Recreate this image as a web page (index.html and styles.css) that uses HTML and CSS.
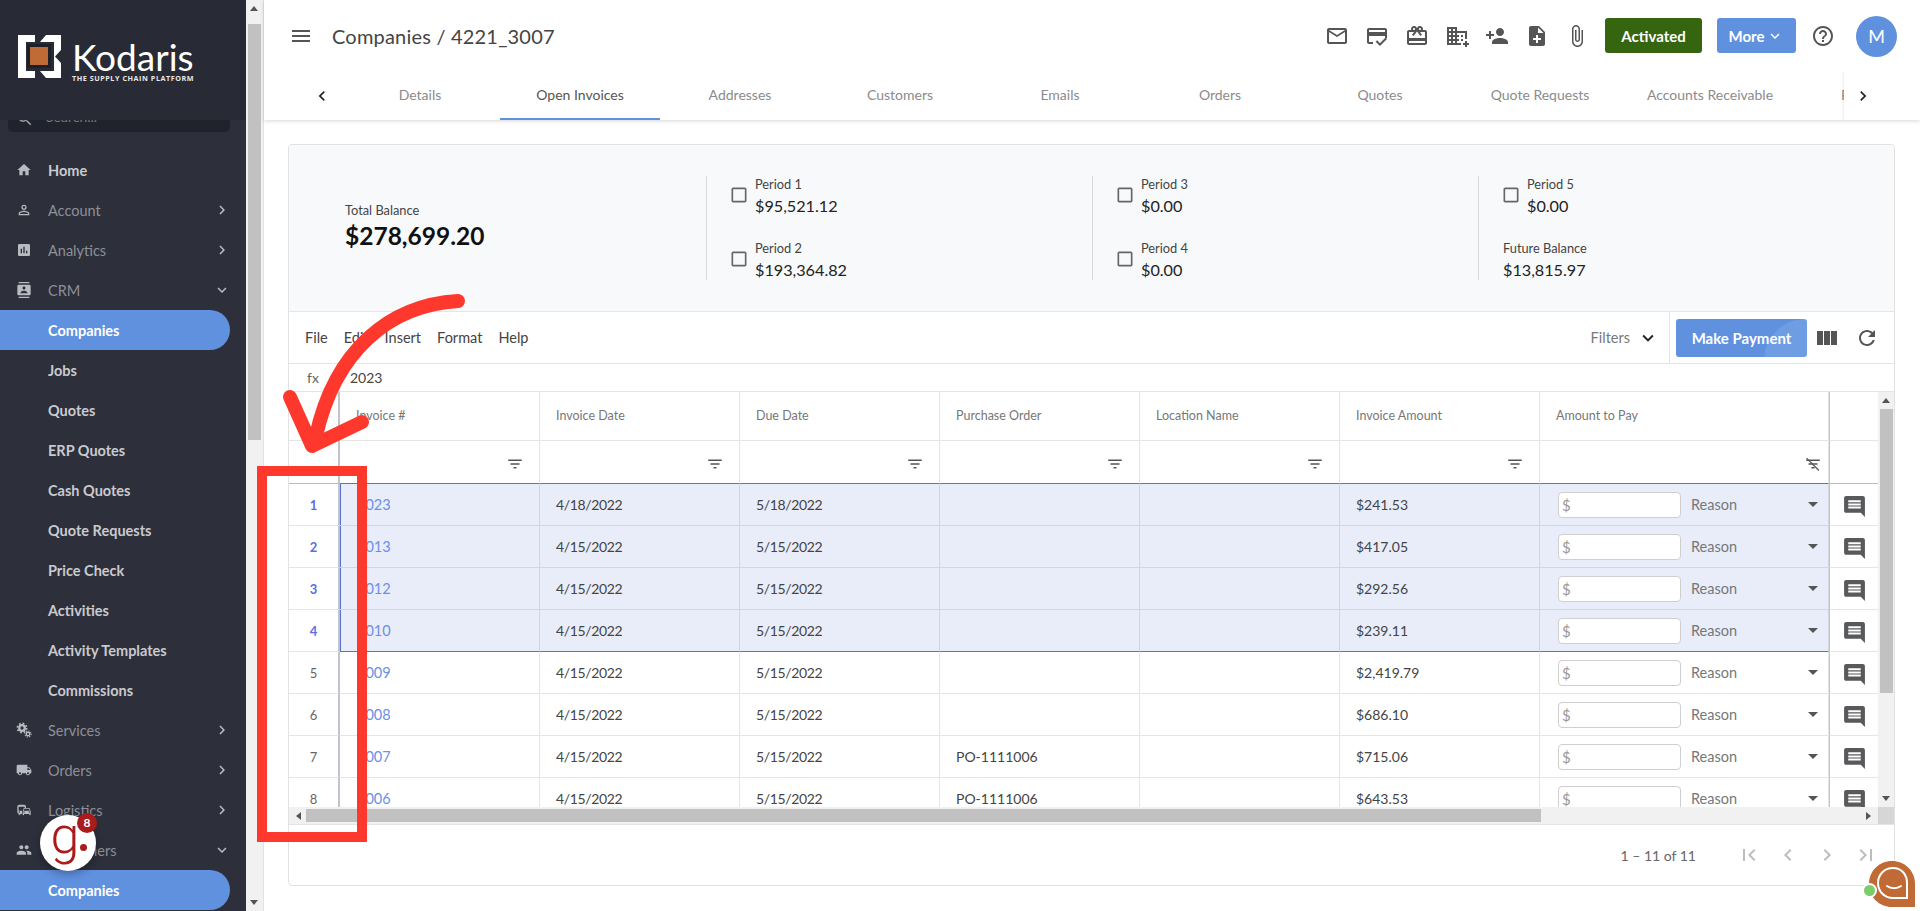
FILE: index.html
```html
<!DOCTYPE html>
<html lang="en">
<head>
<meta charset="utf-8">
<title>Companies / 4221_3007</title>
<link rel="stylesheet" href="styles.css">
</head>
<body>
<svg class="sprite" xmlns="http://www.w3.org/2000/svg">
  <symbol id="i-home" viewBox="0 0 24 24"><path d="M10 20v-6h4v6h5v-8h3L12 3 2 12h3v8z"/></symbol>
  <symbol id="i-search" viewBox="0 0 24 24"><path d="M15.5 14h-.79l-.28-.27C15.41 12.59 16 11.11 16 9.5 16 5.91 13.09 3 9.5 3S3 5.91 3 9.5 5.91 16 9.5 16c1.61 0 3.09-.59 4.23-1.57l.27.28v.79l5 4.99L20.49 19l-4.99-5zm-6 0C7.01 14 5 11.99 5 9.5S7.01 5 9.5 5 14 7.01 14 9.5 11.99 14 9.5 14z"/></symbol>
  <symbol id="i-person" viewBox="0 0 24 24"><path d="M12 5.9c1.16 0 2.1.94 2.1 2.1s-.94 2.1-2.1 2.1S9.9 9.16 9.9 8s.94-2.1 2.1-2.1m0 9c2.97 0 6.1 1.46 6.1 2.1v1.1H5.9V17c0-.64 3.13-2.1 6.1-2.1M12 4C9.79 4 8 5.79 8 8s1.79 4 4 4 4-1.79 4-4-1.79-4-4-4zm0 9c-2.67 0-8 1.34-8 4v3h16v-3c0-2.66-5.33-4-8-4z"/></symbol>
  <symbol id="i-chart" viewBox="0 0 24 24"><path d="M19 3H5c-1.1 0-2 .9-2 2v14c0 1.1.9 2 2 2h14c1.1 0 2-.9 2-2V5c0-1.1-.9-2-2-2zM9 17H7v-7h2v7zm4 0h-2V7h2v10zm4 0h-2v-4h2v4z"/></symbol>
  <symbol id="i-contacts" viewBox="0 0 24 24"><path d="M20 0H4v2h16V0zM4 24h16v-2H4v2zM20 4H4c-1.1 0-2 .9-2 2v12c0 1.1.9 2 2 2h16c1.1 0 2-.9 2-2V6c0-1.1-.9-2-2-2zm-8 2.75c1.24 0 2.25 1.01 2.25 2.25s-1.01 2.25-2.25 2.25S9.75 10.24 9.75 9 10.76 6.75 12 6.75zM17 17H7v-1.5c0-1.67 3.33-2.5 5-2.5s5 .83 5 2.5V17z"/></symbol>
  <symbol id="i-gears" viewBox="0 0 24 24"><circle cx="9" cy="9" r="4.2" fill="none" stroke="currentColor" stroke-width="3.4"/><circle cx="9" cy="9" r="7" fill="none" stroke="currentColor" stroke-width="2.4" stroke-dasharray="2.6 2.9"/><circle cx="18" cy="18" r="2.6" fill="none" stroke="currentColor" stroke-width="2"/><circle cx="18" cy="18" r="4.6" fill="none" stroke="currentColor" stroke-width="1.6" stroke-dasharray="1.8 1.8"/></symbol>
  <symbol id="i-truck" viewBox="0 0 24 24"><path d="M20 8h-3V4H3c-1.1 0-2 .9-2 2v11h2c0 1.66 1.34 3 3 3s3-1.34 3-3h6c0 1.66 1.34 3 3 3s3-1.34 3-3h2v-5l-3-4zM6 18.5c-.83 0-1.5-.67-1.5-1.5s.67-1.5 1.5-1.5 1.5.67 1.5 1.5-.67 1.5-1.5 1.5zm13.5-9l1.96 2.5H17V9.5h2.5zm-1.5 9c-.83 0-1.5-.67-1.5-1.5s.67-1.5 1.5-1.5 1.5.67 1.5 1.5-.67 1.5-1.5 1.5z"/></symbol>
  <symbol id="i-commute" viewBox="0 0 24 24"><path d="M12 4H5C3.34 4 2 5.34 2 7v8c0 1.66 1.34 3 3 3l-1 1v1h1l2-2h2v-5H4V6.99L13 7v2h2V7c0-1.66-1.34-3-3-3zM5 14c.55 0 1 .45 1 1s-.45 1-1 1-1-.45-1-1 .45-1 1-1zm15.57-4.34c-.14-.4-.52-.66-.97-.66h-7.19c-.46 0-.83.26-.98.66L10 13.77l.01 5.51c0 .38.31.72.69.72h.62c.38 0 .68-.38.68-.76V18h8v1.24c0 .38.31.76.69.76h.61c.38 0 .69-.34.69-.72l.01-1.37v-4.14l-1.43-4.07zm-8.16.34h7.19l1.03 3h-9.25l1.03-3zM12 16c-.55 0-1-.45-1-1s.45-1 1-1 1 .45 1 1-.45 1-1 1zm8 0c-.55 0-1-.45-1-1s.45-1 1-1 1 .45 1 1-.45 1-1 1z"/></symbol>
  <symbol id="i-group" viewBox="0 0 24 24"><path d="M16 11c1.66 0 2.99-1.34 2.99-3S17.66 5 16 5c-1.66 0-3 1.34-3 3s1.34 3 3 3zm-8 0c1.66 0 2.99-1.34 2.99-3S9.66 5 8 5C6.34 5 5 6.34 5 8s1.34 3 3 3zm0 2c-2.33 0-7 1.17-7 3.5V19h14v-2.5c0-2.33-4.67-3.5-7-3.5zm8 0c-.29 0-.62.02-.97.05 1.16.84 1.97 1.97 1.97 3.45V19h6v-2.5c0-2.33-4.67-3.5-7-3.5z"/></symbol>
  <symbol id="i-right" viewBox="0 0 24 24"><path d="M10 6L8.59 7.41 13.17 12l-4.58 4.59L10 18l6-6z"/></symbol>
  <symbol id="i-left" viewBox="0 0 24 24"><path d="M15.41 7.41L14 6l-6 6 6 6 1.41-1.41L10.83 12z"/></symbol>
  <symbol id="i-down" viewBox="0 0 24 24"><path d="M16.59 8.59L12 13.17 7.41 8.59 6 10l6 6 6-6z"/></symbol>
  <symbol id="i-menu" viewBox="0 0 24 24"><path d="M3 18h18v-2H3v2zm0-5h18v-2H3v2zm0-7v2h18V6H3z"/></symbol>
  <symbol id="i-mail" viewBox="0 0 24 24"><path d="M20 4H4c-1.1 0-1.99.9-1.99 2L2 18c0 1.1.9 2 2 2h16c1.1 0 2-.9 2-2V6c0-1.1-.9-2-2-2zm0 14H4V8l8 5 8-5v10zm-8-7L4 6h16l-8 5z"/></symbol>
  <symbol id="i-score" viewBox="0 0 24 24"><path d="M20 4H4c-1.11 0-2 .89-2 2v12c0 1.11.89 2 2 2h4v-2H4v-6h16v2h2V6c0-1.11-.89-2-2-2zm0 4H4V6h16v2zm-5.07 11.17l-2.83-2.83-1.41 1.41L14.93 22 22 14.93l-1.41-1.41-5.66 5.65z"/></symbol>
  <symbol id="i-gift" viewBox="0 0 24 24"><path d="M20 6h-2.18c.11-.31.18-.65.18-1 0-1.66-1.34-3-3-3-1.05 0-1.96.54-2.5 1.35l-.5.67-.5-.68C10.96 2.54 10.05 2 9 2 7.34 2 6 3.34 6 5c0 .35.07.69.18 1H4c-1.11 0-1.99.89-1.99 2L2 19c0 1.11.89 2 2 2h16c1.11 0 2-.89 2-2V8c0-1.11-.89-2-2-2zm-5-2c.55 0 1 .45 1 1s-.45 1-1 1-1-.45-1-1 .45-1 1-1zM9 4c.55 0 1 .45 1 1s-.45 1-1 1-1-.45-1-1 .45-1 1-1zm11 15H4v-2h16v2zm0-5H4V8h5.08L7 10.83 8.62 12 11 8.76l1-1.36 1 1.36L15.38 12 17 10.83 14.92 8H20v6z"/></symbol>
  <symbol id="i-domain" viewBox="0 0 24 24"><path d="M12 7V3H2v18h14v-2h-4v-2h2v-2h-2v-2h2v-2h-2V9h8v6h2V7H12zM6 19H4v-2h2v2zm0-4H4v-2h2v2zm0-4H4V9h2v2zm0-4H4V5h2v2zm4 12H8v-2h2v2zm0-4H8v-2h2v2zm0-4H8V9h2v2zm0-4H8V5h2v2zm14 12v2h-2v2h-2v-2h-2v-2h2v-2h2v2h2zm-6-8h-2v2h2v-2zm0 4h-2v2h2v-2z"/></symbol>
  <symbol id="i-padd" viewBox="0 0 24 24"><path d="M15 12c2.21 0 4-1.79 4-4s-1.79-4-4-4-4 1.79-4 4 1.79 4 4 4zm-9-2V7H4v3H1v2h3v3h2v-3h3v-2H6zm9 4c-2.67 0-8 1.34-8 4v2h16v-2c0-2.66-5.33-4-8-4z"/></symbol>
  <symbol id="i-note" viewBox="0 0 24 24"><path d="M14 2H6c-1.1 0-1.99.9-1.99 2L4 20c0 1.1.89 2 1.99 2H18c1.1 0 2-.9 2-2V8l-6-6zm2 14h-3v3h-2v-3H8v-2h3v-3h2v3h3v2zm-3-7V3.5L18.5 9H13z"/></symbol>
  <symbol id="i-clip" viewBox="0 0 24 24"><path d="M16.5 6v11.5c0 2.21-1.79 4-4 4s-4-1.79-4-4V5c0-1.38 1.12-2.5 2.5-2.5s2.5 1.12 2.5 2.5v10.5c0 .55-.45 1-1 1s-1-.45-1-1V6H10v9.5c0 1.38 1.12 2.5 2.5 2.5s2.5-1.12 2.5-2.5V5c0-2.21-1.79-4-4-4S7 2.79 7 5v12.5c0 3.04 2.46 5.5 5.5 5.5s5.5-2.46 5.5-5.5V6h-1.5z"/></symbol>
  <symbol id="i-help" viewBox="0 0 24 24"><path d="M11 18h2v-2h-2v2zm1-16C6.48 2 2 6.48 2 12s4.48 10 10 10 10-4.48 10-10S17.52 2 12 2zm0 18c-4.41 0-8-3.59-8-8s3.59-8 8-8 8 3.59 8 8-3.59 8-8 8zm0-14c-2.21 0-4 1.79-4 4h2c0-1.1.9-2 2-2s2 .9 2 2c0 2-3 1.75-3 5h2c0-2.25 3-2.5 3-5 0-2.21-1.79-4-4-4z"/></symbol>
  <symbol id="i-cols" viewBox="0 0 24 24"><path d="M2 5v14h6V5H2zm7 0v14h6V5H9zm7 0v14h6V5h-6z"/></symbol>
  <symbol id="i-refresh" viewBox="0 0 24 24"><path d="M17.65 6.35C16.2 4.9 14.21 4 12 4c-4.42 0-7.99 3.58-7.99 8s3.57 8 7.99 8c3.73 0 6.84-2.55 7.73-6h-2.08c-.82 2.33-3.04 4-5.65 4-3.31 0-6-2.69-6-6s2.69-6 6-6c1.66 0 3.14.69 4.22 1.78L13 11h7V4l-2.35 2.35z"/></symbol>
  <symbol id="i-box" viewBox="0 0 24 24"><path d="M19 5v14H5V5h14m0-2H5c-1.1 0-2 .9-2 2v14c0 1.1.9 2 2 2h14c1.1 0 2-.9 2-2V5c0-1.1-.9-2-2-2z"/></symbol>
  <symbol id="i-filter" viewBox="0 0 24 24"><path d="M10 18h4v-2h-4v2zM3 6v2h18V6H3zm3 7h12v-2H6v2z"/></symbol>
  <symbol id="i-filteroff" viewBox="0 0 24 24"><path d="M10 18h4v-2h-4v2zM3 6v2h18V6H3zm3 7h12v-2H6v2z"/><path d="M4 3.5L20.5 20l-1.2 1.2L2.8 4.7z"/></symbol>
  <symbol id="i-chat" viewBox="0 0 24 24"><path d="M20 2H4c-1.1 0-1.99.9-1.99 2L2 16c0 1.1.9 2 2 2h14l4 4V4c0-1.1-.9-2-2-2zm-2 12H6v-2h12v2zm0-3H6V9h12v2zm0-3H6V6h12v2z"/></symbol>
  <symbol id="i-first" viewBox="0 0 24 24"><path d="M18.41 16.59L13.82 12l4.59-4.59L17 6l-6 6 6 6zM6 6h2v12H6z"/></symbol>
  <symbol id="i-last" viewBox="0 0 24 24"><path d="M5.59 7.41L10.18 12l-4.59 4.59L7 18l6-6-6-6zM16 6h2v12h-2z"/></symbol>
</svg>

<aside class="sidebar">
  <div class="brand">
    <svg class="brand-mark" viewBox="0 0 43 43">
      <polygon class="w" points="0,0 17,0 17,7 8,7 8,36 17,36 17,43 0,43"/>
      <polygon class="w" points="28,0 43,0 43,15 37,21.5 43,28 43,43 28,43 22,36 36,36 36,7 22,7"/>
      <rect class="o" x="10.5" y="10.5" width="21" height="21"/>
    </svg>
    <div class="brand-text">
      <div class="brand-name">Kodaris</div>
      <div class="brand-tag">THE SUPPLY CHAIN PLATFORM</div>
    </div>
  </div>
  <div class="search-peek"><svg class="search-ico"><use href="#i-search"/></svg><span>Search...</span></div>
  <nav class="nav">
    <a class="nav-item top lit"><svg class="ico"><use href="#i-home"/></svg><span>Home</span></a>
    <a class="nav-item top"><svg class="ico"><use href="#i-person"/></svg><span>Account</span><svg class="caret"><use href="#i-right"/></svg></a>
    <a class="nav-item top"><svg class="ico"><use href="#i-chart"/></svg><span>Analytics</span><svg class="caret"><use href="#i-right"/></svg></a>
    <a class="nav-item top"><svg class="ico"><use href="#i-contacts"/></svg><span>CRM</span><svg class="caret"><use href="#i-down"/></svg></a>
    <a class="nav-item sub active"><span>Companies</span></a>
    <a class="nav-item sub"><span>Jobs</span></a>
    <a class="nav-item sub"><span>Quotes</span></a>
    <a class="nav-item sub"><span>ERP Quotes</span></a>
    <a class="nav-item sub"><span>Cash Quotes</span></a>
    <a class="nav-item sub"><span>Quote Requests</span></a>
    <a class="nav-item sub"><span>Price Check</span></a>
    <a class="nav-item sub"><span>Activities</span></a>
    <a class="nav-item sub"><span>Activity Templates</span></a>
    <a class="nav-item sub"><span>Commissions</span></a>
    <a class="nav-item top"><svg class="ico"><use href="#i-gears"/></svg><span>Services</span><svg class="caret"><use href="#i-right"/></svg></a>
    <a class="nav-item top"><svg class="ico"><use href="#i-truck"/></svg><span>Orders</span><svg class="caret"><use href="#i-right"/></svg></a>
    <a class="nav-item top"><svg class="ico"><use href="#i-commute"/></svg><span>Logistics</span><svg class="caret"><use href="#i-right"/></svg></a>
    <a class="nav-item top"><svg class="ico"><use href="#i-group"/></svg><span>Customers</span><svg class="caret"><use href="#i-down"/></svg></a>
    <a class="nav-item sub active"><span>Companies</span></a>
  </nav>
</aside>

<div class="side-scroll">
  <span class="arr up"></span>
  <span class="side-thumb"></span>
  <span class="arr dn"></span>
</div>

<main class="main">
  <header class="topbar">
    <div class="toprow">
      <svg class="menu-ico"><use href="#i-menu"/></svg>
      <h1 class="title">Companies / 4221_3007</h1>
      <div class="actions">
        <svg class="act"><use href="#i-mail"/></svg>
        <svg class="act"><use href="#i-score"/></svg>
        <svg class="act"><use href="#i-gift"/></svg>
        <svg class="act"><use href="#i-domain"/></svg>
        <svg class="act"><use href="#i-padd"/></svg>
        <svg class="act"><use href="#i-note"/></svg>
        <svg class="act"><use href="#i-clip"/></svg>
      </div>
      <button class="btn green">Activated</button>
      <button class="btn blue more">More<svg class="more-caret"><use href="#i-down"/></svg></button>
      <svg class="help"><use href="#i-help"/></svg>
      <div class="avatar">M</div>
    </div>
    <div class="tabs">
      <div class="tab-nav left"><svg><use href="#i-left"/></svg></div>
      <div class="tab-list">
        <a class="tab">Details</a>
        <a class="tab active">Open Invoices</a>
        <a class="tab">Addresses</a>
        <a class="tab">Customers</a>
        <a class="tab">Emails</a>
        <a class="tab">Orders</a>
        <a class="tab">Quotes</a>
        <a class="tab">Quote Requests</a>
        <a class="tab wide">Accounts Receivable</a>
        <a class="tab clipped">Favorites</a>
      </div>
      <div class="tab-nav right"><svg><use href="#i-right"/></svg></div>
    </div>
  </header>

  <section class="card">
    <div class="summary">
      <div class="total">
        <div class="lab">Total Balance</div>
        <div class="big">$278,699.20</div>
      </div>
      <div class="period-col">
        <div class="stat"><svg class="check"><use href="#i-box"/></svg><div><div class="lab">Period 1</div><div class="val">$95,521.12</div></div></div>
        <div class="stat"><svg class="check"><use href="#i-box"/></svg><div><div class="lab">Period 2</div><div class="val">$193,364.82</div></div></div>
      </div>
      <div class="period-col">
        <div class="stat"><svg class="check"><use href="#i-box"/></svg><div><div class="lab">Period 3</div><div class="val">$0.00</div></div></div>
        <div class="stat"><svg class="check"><use href="#i-box"/></svg><div><div class="lab">Period 4</div><div class="val">$0.00</div></div></div>
      </div>
      <div class="period-col">
        <div class="stat"><svg class="check"><use href="#i-box"/></svg><div><div class="lab">Period 5</div><div class="val">$0.00</div></div></div>
        <div class="stat future"><div><div class="lab">Future Balance</div><div class="val">$13,815.97</div></div></div>
      </div>
    </div>

    <div class="toolbar">
      <div class="menus"><span>File</span><span>Edit</span><span>Insert</span><span>Format</span><span>Help</span></div>
      <div class="filters"><em>Filters</em><svg><use href="#i-down"/></svg></div>
      <button class="btn blue pay">Make Payment</button>
      <svg class="tool cols"><use href="#i-cols"/></svg>
      <svg class="tool refresh"><use href="#i-refresh"/></svg>
    </div>

    <div class="fxbar"><span class="fx">fx</span><span>2023</span></div>

    <div class="grid-area">
      <div class="table-clip">
        <table class="sheet">
          <colgroup><col class="c-n"><col class="c-i"><col class="c-d"><col class="c-d"><col class="c-d"><col class="c-d"><col class="c-d"><col class="c-p"><col class="c-x"></colgroup>
          <thead>
            <tr class="h1"><th class="n"></th><th>Invoice #</th><th>Invoice Date</th><th>Due Date</th><th>Purchase Order</th><th>Location Name</th><th>Invoice Amount</th><th>Amount to Pay</th><th class="x"></th></tr>
            <tr class="h2"><th class="n"></th>
              <th><svg class="fl"><use href="#i-filter"/></svg></th><th><svg class="fl"><use href="#i-filter"/></svg></th><th><svg class="fl"><use href="#i-filter"/></svg></th><th><svg class="fl"><use href="#i-filter"/></svg></th><th><svg class="fl"><use href="#i-filter"/></svg></th><th><svg class="fl"><use href="#i-filter"/></svg></th><th class="off"><svg class="fl"><use href="#i-filteroff"/></svg></th><th class="x"></th></tr>
          </thead>
          <tbody>
            <tr class="sel first"><td class="n">1</td><td class="link">2023</td><td>4/18/2022</td><td>5/18/2022</td><td></td><td></td><td>$241.53</td><td class="pay-cell"><div class="pay-wrap"><span class="money">$</span><span class="reason">Reason</span><i class="tri"></i></div></td><td class="x"><svg class="cm"><use href="#i-chat"/></svg></td></tr>
            <tr class="sel"><td class="n">2</td><td class="link">2013</td><td>4/15/2022</td><td>5/15/2022</td><td></td><td></td><td>$417.05</td><td class="pay-cell"><div class="pay-wrap"><span class="money">$</span><span class="reason">Reason</span><i class="tri"></i></div></td><td class="x"><svg class="cm"><use href="#i-chat"/></svg></td></tr>
            <tr class="sel"><td class="n">3</td><td class="link">2012</td><td>4/15/2022</td><td>5/15/2022</td><td></td><td></td><td>$292.56</td><td class="pay-cell"><div class="pay-wrap"><span class="money">$</span><span class="reason">Reason</span><i class="tri"></i></div></td><td class="x"><svg class="cm"><use href="#i-chat"/></svg></td></tr>
            <tr class="sel last"><td class="n">4</td><td class="link">2010</td><td>4/15/2022</td><td>5/15/2022</td><td></td><td></td><td>$239.11</td><td class="pay-cell"><div class="pay-wrap"><span class="money">$</span><span class="reason">Reason</span><i class="tri"></i></div></td><td class="x"><svg class="cm"><use href="#i-chat"/></svg></td></tr>
            <tr><td class="n">5</td><td class="link">2009</td><td>4/15/2022</td><td>5/15/2022</td><td></td><td></td><td>$2,419.79</td><td class="pay-cell"><div class="pay-wrap"><span class="money">$</span><span class="reason">Reason</span><i class="tri"></i></div></td><td class="x"><svg class="cm"><use href="#i-chat"/></svg></td></tr>
            <tr><td class="n">6</td><td class="link">2008</td><td>4/15/2022</td><td>5/15/2022</td><td></td><td></td><td>$686.10</td><td class="pay-cell"><div class="pay-wrap"><span class="money">$</span><span class="reason">Reason</span><i class="tri"></i></div></td><td class="x"><svg class="cm"><use href="#i-chat"/></svg></td></tr>
            <tr><td class="n">7</td><td class="link">2007</td><td>4/15/2022</td><td>5/15/2022</td><td>PO-1111006</td><td></td><td>$715.06</td><td class="pay-cell"><div class="pay-wrap"><span class="money">$</span><span class="reason">Reason</span><i class="tri"></i></div></td><td class="x"><svg class="cm"><use href="#i-chat"/></svg></td></tr>
            <tr><td class="n">8</td><td class="link">2006</td><td>4/15/2022</td><td>5/15/2022</td><td>PO-1111006</td><td></td><td>$643.53</td><td class="pay-cell"><div class="pay-wrap"><span class="money">$</span><span class="reason">Reason</span><i class="tri"></i></div></td><td class="x"><svg class="cm"><use href="#i-chat"/></svg></td></tr>
          </tbody>
        </table>
        <div class="vscroll"><span class="arr up"></span><span class="v-thumb"></span><span class="arr dn"></span></div>
      </div>
      <div class="hscroll-row">
        <div class="hscroll"><span class="arr lf"></span><span class="h-thumb"></span><span class="arr rt"></span></div>
        <div class="corner"></div>
      </div>
    </div>

    <div class="pager">
      <span class="range">1 – 11 of 11</span>
      <svg class="pg"><use href="#i-first"/></svg>
      <svg class="pg"><use href="#i-left"/></svg>
      <svg class="pg"><use href="#i-right"/></svg>
      <svg class="pg"><use href="#i-last"/></svg>
    </div>
  </section>
</main>

<svg class="annot" viewBox="0 0 1920 911">
  <path d="M458 301C390 305 335 350 316 436"/>
  <path d="M290 397L312 446L362 422"/>
</svg>
<div class="red-box"></div>

<div class="gist"><span class="gist-g">g</span><span class="gist-dot"></span><span class="gist-badge">8</span></div>

<div class="chat">
  <svg viewBox="0 0 46 46" class="chat-svg">
    <path class="bub" d="M23 0C36 0 46 10 46 23V46H23C10 46 0 36 0 23S10 0 23 0Z"/>
    <path class="ring" d="M24 7C15 7 9 14 9 22S15 37 24 37H38V22C38 14 33 7 24 7Z"/>
    <path class="smile" d="M18 25C22 28 28 28 32 25"/>
  </svg>
  <span class="dot"></span>
</div>
</body>
</html>
```
FILE: styles.css
```css
* { box-sizing: border-box; }
html, body { margin: 0; height: 100%; }
body {
  display: flex;
  height: 911px;
  overflow: hidden;
  position: relative;
  background: #fff;
  font-family: "Lato", "Open Sans", sans-serif;
  font-size: 14px;
  color: #444;
}
.sprite { display: none; }
svg { fill: currentColor; }

/* sidebar */
.sidebar { width: 246px; flex: none; background: #2d2f3b; overflow: hidden; }
.brand { height: 120px; background: #282b35; display: flex; align-items: flex-start; padding: 35px 0 0 18px; gap: 11px; }
.brand-mark { width: 43px; height: 43px; flex: none; }
.brand-mark .w { fill: #fff; }
.brand-mark .o { fill: #c06a36; stroke: #1e2027; stroke-width: 3; }
.brand-text { color: #fff; display: flex; flex-direction: column; }
.brand-name { font-size: 37px; line-height: 32px; margin-top: 6px; }
.brand-tag { font-size: 7.2px; line-height: 9px; margin-top: 1px; font-weight: 700; letter-spacing: .55px; color: #e8e8e8; white-space: nowrap; font-family: "Open Sans", sans-serif; }
.search-peek { height: 12px; margin: 0 16px 0 8px; background: #21232c; border-radius: 0 0 5px 5px; overflow: hidden; display: flex; align-items: flex-end; gap: 12px; padding-left: 8px; color: #77797f; font-size: 14px; line-height: 30px; }
.search-peek span { height: 30px; flex: none; }
.search-ico { width: 18px; height: 18px; flex: none; color: #9a9ca2; margin-bottom: 4px; }
.nav { margin-top: 18px; display: flex; flex-direction: column; }
.nav-item { height: 40px; display: flex; align-items: center; font-size: 14.5px; color: #8d8f97; padding-left: 16px; margin-right: 16px; }
.nav-item .ico { width: 16px; height: 16px; color: #b9bbc0; margin-right: 16px; flex: none; }
.nav-item .caret { width: 18px; height: 18px; margin-left: auto; margin-right: -1px; color: #b9bbc0; }
.nav-item.lit { color: #c9cace; font-weight: 700; }
.nav-item.sub { padding-left: 48px; color: #c9cace; font-weight: 700; }
.nav-item.active { background: #5f91df; color: #fff; border-radius: 0 20px 20px 0; }

.side-scroll { width: 18px; flex: none; background: #f1f1f1; border-right: 1px solid #e3e3e3; display: flex; flex-direction: column; align-items: center; padding: 6px 1px 6px 0; }
.side-thumb { width: 13px; margin-top: 13px; height: 416px; background: #c1c1c1; }
.side-scroll .dn { margin-top: auto; }
.arr { width: 0; height: 0; border: 4px solid transparent; display: block; flex: none; }
.arr.up { border-bottom: 5px solid #555; border-top-width: 0; }
.arr.dn { border-top: 5px solid #555; border-bottom-width: 0; }
.arr.lf { border-right: 5px solid #555; border-left-width: 0; }
.arr.rt { border-left: 5px solid #555; border-right-width: 0; }

/* main */
.main { flex: 1; min-width: 0; display: flex; flex-direction: column; }
.topbar { height: 120px; flex: none; background: #fff; box-shadow: 0 1px 4px rgba(0,0,0,.16); display: flex; flex-direction: column; position: relative; }
.toprow { height: 72px; display: flex; align-items: center; padding: 0 23px 0 25px; }
.menu-ico { width: 24px; height: 24px; color: #555; flex: none; }
.title { margin: 0 0 0 19px; font-size: 20px; line-height: 24px; font-weight: 400; color: #444; letter-spacing: .2px; }
.actions { margin-left: auto; display: flex; gap: 16px; margin-right: 16px; }
.act { width: 24px; height: 24px; color: #555; }
.btn { border: 0; border-radius: 3px; color: #fff; font: 700 15px "Lato", sans-serif; height: 35px; padding: 0; margin-bottom: 1px; }
.btn.green { background: #35660f; width: 97px; }
.btn.blue { background: #5f91df; }
.btn.more { width: 79px; margin-left: 15px; display: flex; align-items: center; justify-content: center; gap: 2px; }
.more-caret { width: 18px; height: 18px; }
.help { width: 24px; height: 24px; color: #555; margin-left: 15px; }
.avatar { width: 41px; height: 41px; border-radius: 50%; background: #5f91df; color: #fff; font-size: 18px; display: flex; align-items: center; justify-content: center; margin-left: 21px; }

.tabs { height: 48px; display: flex; position: relative; overflow: hidden; }
.tab-list { display: flex; flex: none; margin-left: 76px; }
.tab { height: 48px; flex: none; width: 160px; display: flex; align-items: center; justify-content: center; font-size: 14px; color: #8b8b8b; padding-bottom: 3px; white-space: nowrap; }
.tab.wide { width: 180px; }
.tab.clipped { justify-content: flex-start; padding-left: 41px; }
.tab.active { color: #555; border-bottom: 2px solid #5f91df; padding-bottom: 1px; }
.tab-nav { position: absolute; top: 0; bottom: 0; width: 40px; background: #fff; display: flex; align-items: center; justify-content: center; color: #222; z-index: 1; }
.tab-nav svg { width: 20px; height: 20px; }
.tab-nav.left { left: 38px; top: -1px; }
.tab-nav.right { right: 0; width: 76px; padding-right: 38px; box-shadow: -1px 0 2px rgba(0,0,0,.08); }

/* card */
.card { flex: none; margin: 24px 25px 0 24px; height: 742px; border: 1px solid #e2e2e2; border-radius: 4px; display: flex; flex-direction: column; overflow: hidden; background: #fff; }
.summary { height: 167px; flex: none; background: #f8f9fb; border-bottom: 1px solid #e6e6e6; display: flex; align-items: center; }
.total { width: 417px; padding-left: 56px; margin-top: -2px; }
.lab { font-size: 12.8px; line-height: 16px; color: #444; }
.big { font-size: 24.5px; line-height: 32px; color: #111; font-weight: 700; margin-top: 2px; }
.val { font-size: 16.2px; line-height: 18px; color: #222; margin-top: 5px; }
.period-col { width: 386px; height: 104px; border-left: 1px solid #d9d9d9; padding-left: 22px; display: flex; flex-direction: column; justify-content: space-between; margin-top: -1px; }
.stat { display: flex; align-items: center; gap: 6px; height: 41px; margin-top: -1px; }
.stat.future { padding-left: 2px; }
.check { width: 20px; height: 20px; color: #666; flex: none; }

.toolbar { height: 52px; flex: none; display: flex; align-items: center; border-bottom: 1px solid #e4e4e4; padding-right: 15px; }
.menus { display: flex; gap: 16px; padding-left: 16px; color: #444; font-size: 14.5px; }
.filters { margin-left: auto; display: flex; align-items: center; gap: 7px; color: #777; height: 51px; padding-right: 10px; border-right: 1px solid #e4e4e4; font-size: 14.5px; }
.filters em { font-style: normal; }
.filters svg { width: 22px; height: 22px; color: #222; }
.btn.pay { width: 131px; height: 38px; margin-left: 6px; margin-bottom: 0; background: radial-gradient(circle 41px at 129px 41px, #6f9de4 99%, #5f91df 100%); }
.tool { width: 24px; height: 24px; color: #555; }
.tool.cols { margin-left: 8px; }
.tool.refresh { margin-left: 16px; }

.fxbar { height: 28px; flex: none; display: flex; align-items: center; border-bottom: 1px solid #e4e4e4; color: #444; }
.fx { width: 61px; padding-left: 18px; color: #666; }

.grid-area { flex: none; display: flex; flex-direction: column; border-bottom: 1px solid #e4e4e4; }
.table-clip { height: 415px; display: flex; overflow: hidden; }
.sheet { width: 1589px; flex: none; border-collapse: separate; border-spacing: 0; table-layout: fixed; align-self: flex-start; }
.c-n { width: 51px; } .c-i { width: 200px; } .c-d { width: 200px; } .c-p { width: 289px; } .c-x { width: 49px; }
.sheet th { font-weight: 400; text-align: left; color: #777; font-size: 12.5px; padding: 0 0 0 16px; border-right: 1px solid #e5e5e5; border-bottom: 1px solid #e5e5e5; position: relative; }
.sheet td { height: 42px; padding: 0 0 0 16px; border-right: 1px solid #e5e5e5; border-bottom: 1px solid #e5e5e5; color: #444; white-space: nowrap; }
.sheet td:nth-child(3), .sheet td:nth-child(4) { letter-spacing: -.35px; }
.h1 th { height: 49px; padding-bottom: 2px; }
.h2 th { height: 43px; text-align: right; padding: 4px 15px 0 0; border-bottom: 1px solid #bbb; }
.h2 th.off { padding-right: 6px; }
.fl { width: 18px; height: 18px; color: #555; vertical-align: middle; }
.sheet .n { padding: 0; text-align: center; border-right: 2px solid #c3c3cb; color: #666; font-size: 13px; }
.sheet .x { padding: 0; text-align: center; border-left: 1px solid #c3c3cb; border-right: 0; }
.sheet .link { color: #6d8fe6; padding-left: 17px; font-size: 14.5px; }
.sel td { background: #e8edf9; border-bottom-color: #d2d6e2; border-right-color: #d2d6e2; }
.sel td.n { background: #fff; color: #5a6fe0; font-weight: 700; border-bottom-color: #e5e5e5; }
.sel td.x { background: #fff; border-bottom-color: #e5e5e5; }
.sel .link { box-shadow: inset 1px 0 0 #5a6fd0; }
.h2 th:not(.n):not(.x) { border-bottom-color: #5a6fd0; }
.last td:not(.n):not(.x) { border-bottom-color: #5a6fd0; }
.cm { width: 25px; height: 25px; color: #58595b; vertical-align: middle; margin-top: 3px; }
.sheet .pay-cell { padding: 0 0 0 18px; }
.pay-wrap { display: flex; align-items: center; }
.money { width: 123px; height: 26px; background: #fff; border: 1px solid #cfcfcf; border-radius: 4px; color: #999; font-size: 15px; line-height: 24px; padding-left: 3px; flex: none; }
.reason { margin-left: 10px; color: #777; font-size: 14.5px; }
.tri { margin-left: auto; margin-right: 10px; width: 0; height: 0; border: 5px solid transparent; border-top-color: #555; border-bottom-width: 0; }

.vscroll { flex: 1; background: #f1f1f1; display: flex; flex-direction: column; align-items: center; padding: 6px 0; }
.v-thumb { width: 13px; height: 284px; background: #c1c1c1; margin-top: 6px; }
.vscroll .dn { margin-top: auto; }
.hscroll-row { display: flex; height: 17px; }
.hscroll { width: 1589px; flex: none; background: #f1f1f1; display: flex; align-items: center; padding: 0 7px; }
.h-thumb { width: 1235px; height: 13px; margin-left: 5px; background: #c1c1c1; }
.hscroll .rt { margin-left: auto; }
.corner { flex: 1; background: #d6d6d6; }

.pager { flex: 1; display: flex; align-items: center; padding-right: 16px; justify-content: flex-end; gap: 15px; color: #666; }
.range { margin-right: 26px; font-size: 14px; }
.pg { width: 24px; height: 24px; color: #bdbdbd; }

/* overlays */
.annot { position: absolute; inset: 0; width: 1920px; height: 911px; pointer-events: none; fill: none; }
.annot path { fill: none; stroke: #fe382c; stroke-width: 14; stroke-linecap: round; stroke-linejoin: round; }
.red-box { position: absolute; left: 257px; top: 466px; width: 110px; height: 376px; border: 10px solid #fe382c; }

.gist { position: absolute; left: 40px; top: 815px; width: 56px; height: 56px; border-radius: 50%; background: #fff; box-shadow: 0 3px 8px rgba(0,0,0,.3); display: flex; align-items: center; justify-content: center; }
.gist-g { color: #a81c1c; font: 300 52px/46px "Roboto", sans-serif; margin-top: -14px; margin-left: -6px; }
.gist-dot { position: absolute; left: 40px; top: 29px; width: 7px; height: 7px; border-radius: 50%; background: #a81c1c; }
.gist-badge { position: absolute; left: 37px; top: -2px; width: 20px; height: 20px; border-radius: 50%; background: #a81c1c; color: #fff; font: 700 12px/20px "Lato", sans-serif; text-align: center; }

.chat { position: absolute; left: 1869px; top: 861px; width: 46px; height: 46px; }
.chat-svg { display: block; width: 46px; height: 46px; }
.chat .bub { fill: #c06a36; }
.chat .ring { fill: none; stroke: #fff; stroke-width: 2; }
.chat .smile { fill: none; stroke: #fff; stroke-width: 2; stroke-linecap: round; }
.chat .dot { position: absolute; left: -5px; top: 24px; width: 11px; height: 11px; border-radius: 50%; background: #7ccb6d; box-shadow: 0 0 0 2px #fff; }
```
